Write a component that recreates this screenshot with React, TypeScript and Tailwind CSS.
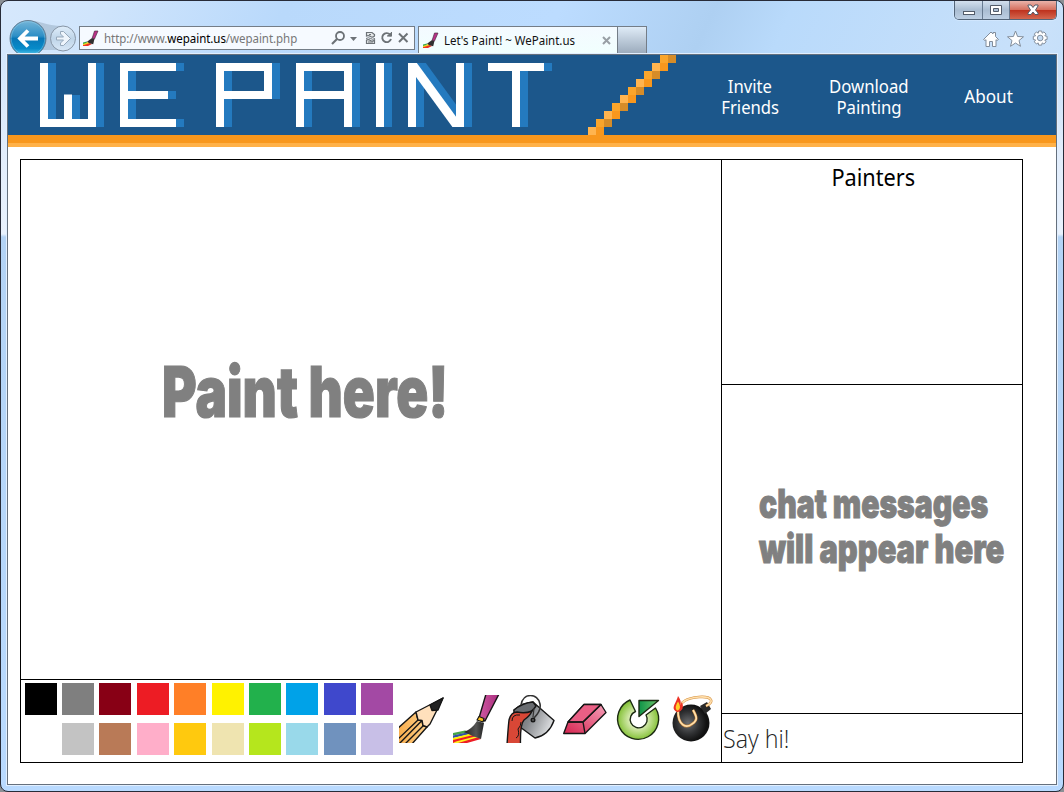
import React from "react";

const SWATCHES: string[][] = [
  ["bg-black", "bg-[#7f7f7f]", "bg-[#880015]", "bg-[#ed1c24]", "bg-[#ff7f27]", "bg-[#fff200]", "bg-[#22b14c]", "bg-[#00a2e8]", "bg-[#3f48cc]", "bg-[#a349a4]"],
  ["bg-white", "bg-[#c3c3c3]", "bg-[#b97a57]", "bg-[#ffaec9]", "bg-[#ffc90e]", "bg-[#efe4b0]", "bg-[#b5e61d]", "bg-[#99d9ea]", "bg-[#7092be]", "bg-[#c8bfe7]"],
];

type Box = [number, number, number, number];

const LOGO_SHADE: Box[] = [
  [40, 8, 8, 56], [64, 40, 8, 24], [88, 8, 8, 64],
  [168, 8, 8, 8], [120, 16, 8, 48], [160, 36, 8, 8], [168, 64, 8, 8],
  [216, 16, 8, 56], [264, 8, 8, 36],
  [296, 16, 8, 56], [344, 8, 8, 64],
  [376, 8, 8, 64],
  [408, 8, 8, 64], [456, 8, 8, 64],
  [536, 8, 8, 8], [512, 16, 8, 56],
];

const LOGO_FACE: Box[] = [
  [32, 8, 8, 64], [56, 39.5, 8, 32.5], [80, 8, 8, 64], [32, 64, 56, 8],
  [112, 8, 8, 64], [112, 8, 56, 8], [112, 36, 48, 8], [112, 64, 56, 8],
  [208, 8, 8, 64], [208, 8, 56, 8], [256, 8, 8, 36], [208, 36, 56, 8],
  [288, 8, 8, 64], [288, 8, 56, 8], [336, 8, 8, 64], [288, 36, 56, 8],
  [368, 8, 8, 64],
  [400, 8, 8, 64], [448, 8, 8, 64],
  [480, 8, 56, 8], [504, 8, 8, 64],
];

function Logo() {
  return (
    <svg width="672" height="80" viewBox="0 0 672 80" className="block shrink-0" role="img" aria-label="We Paint">
      <g fill="#247abf">
        {LOGO_SHADE.map(([x, y, w, h], i) => <rect key={i} x={x} y={y} width={w} height={h} />)}
      </g>
      <svg x="400" y="8" width="56" height="64">
        <line x1="5" y1="-10" x2="69" y2="78" stroke="#247abf" strokeWidth="9" />
      </svg>
      <g fill="#fff">
        {LOGO_FACE.map(([x, y, w, h], i) => <rect key={i} x={x} y={y} width={w} height={h} />)}
      </g>
      <svg x="400" y="8" width="56" height="64">
        <line x1="-4" y1="-10" x2="58" y2="75" stroke="#fff" strokeWidth="9" />
      </svg>
      {Array.from({ length: 10 }, (_, i) => (
        <g key={i}>
          <rect x={652 - i * 8} y={i * 8} width="8" height="8" fill={i % 2 ? "#ffb44f" : "#faa52b"} />
          <rect x={660 - i * 8} y={i * 8} width="8" height="8" fill={i % 2 ? "#f8971d" : "#d68c28"} />
        </g>
      ))}
    </svg>
  );
}

function Favicon() {
  return (
    <svg width="16" height="17" viewBox="0 0 16 17" className="shrink-0">
      <path d="M0 14.500 6 12.500l3 1.500-4 2H0Z" fill="#ed3324" />
      <path d="M0 13.500 5 12l2 1-6 2H0Z" fill="#f4d521" />
      <path d="M0 12.500 4 11.500v1L0 14Z" fill="#36a84a" />
      <path d="m9 8 2.500.8-1.300 5.400-3.700-.9-2.500-1.500Z" fill="#303030" />
      <path d="M11.500 1H15l-3.500 8-2.300-1Z" fill="#b83286" stroke="#3c2636" strokeWidth=".6" />
    </svg>
  );
}

function NavButtons() {
  return (
    <svg width="72" height="34" viewBox="0 0 72 34" className="block shrink-0 -mt-[7px]">
      <defs>
        <linearGradient id="back" x1="0" y1="0" x2="0" y2="1">
          <stop offset="0" stopColor="#75b5d8" />
          <stop offset=".43" stopColor="#2e8fc6" />
          <stop offset=".5" stopColor="#0877b7" />
          <stop offset=".78" stopColor="#078bc9" />
          <stop offset="1" stopColor="#6ad3f2" />
        </linearGradient>
        <linearGradient id="fwd" x1="0" y1="0" x2="0" y2="1">
          <stop offset="0" stopColor="#e0eefb" />
          <stop offset=".5" stopColor="#bfd5e9" />
          <stop offset="1" stopColor="#d9e8f7" />
        </linearGradient>
      </defs>
      <path d="M27 2C39 5 45 7 57 7L50 31H30Z" fill="#a8bdd3" opacity=".75" />
      <circle cx="20" cy="19.500" r="18" fill="url(#back)" stroke="#687f93" strokeWidth="1" />
      <circle cx="20" cy="19.500" r="16.800" fill="none" stroke="#9ed3eb" strokeWidth=".7" opacity=".6" />
      <path d="M30 19.500H12M20 11.500l-8 8 8 8" fill="none" stroke="#fff" strokeWidth="3.800" />
      <circle cx="55" cy="19.500" r="12.500" fill="url(#fwd)" stroke="#8795a5" strokeWidth="1" />
      <path d="M48.500 18h7l-3-3v-2.500h3l7 7-7 7h-3V24l3-3h-7Z" fill="#eef5fc" stroke="#97a9bb" strokeWidth="1" />
    </svg>
  );
}

function AddressIcons() {
  return (
    <svg width="84" height="22" viewBox="0 0 84 22" className="block shrink-0" fill="none" stroke="#6d7277">
      <circle cx="10" cy="9" r="4" strokeWidth="1.800" />
      <path d="m7 12-5 5" strokeWidth="2.200" />
      <path d="M20 10h7l-3.500 4Z" fill="#6d7277" stroke="none" />
      <path d="M36.500 9V5.500h5.500l2.500 2V9q-2 2-4 .5t-4-.5Zm0 4q2-1 4 .5t4-.5v3.500h-8Z" fill="#e4e7e9" strokeWidth="1.200" />
      <path d="M36 11.500q2.500-1.500 4.500 0t4.500 0M38 15h5M39 7.500h2" strokeWidth="1" />
      <path d="M60 7.500A4.500 4.500 0 1 0 61 12" strokeWidth="1.900" />
      <path d="m57 9 4.500.2V5" fill="#6d7277" strokeWidth="1" />
      <path d="m69 6.500 8.500 8.500m0-8.500L69 15" strokeWidth="2" />
    </svg>
  );
}

function WindowControls() {
  return (
    <div className="flex h-[19px] w-[103px] overflow-hidden rounded-b-[5px] border border-t-0 border-[#536579] shadow-[0_0_0_1px_#d7eaffaa]">
      <div className="flex w-[28px] items-center justify-center border-r border-[#687b91] bg-linear-to-b from-[#d3e0ee] via-[#aabdd2] to-[#bdcfe3]">
        <svg width="14" height="16" viewBox="0 0 14 16"><rect x="1.500" y="9.500" width="11" height="3" fill="#fff" stroke="#535c6a" /></svg>
      </div>
      <div className="flex w-[27px] items-center justify-center border-r border-[#687b91] bg-linear-to-b from-[#d3e0ee] via-[#aabdd2] to-[#bdcfe3]">
        <svg width="14" height="16" viewBox="0 0 14 16"><path d="M1.500 3.500h11v9h-11Zm3 3v3h5v-3Z" fill="#fff" fillRule="evenodd" stroke="#535c6a" /></svg>
      </div>
      <div className="flex flex-1 items-center justify-center bg-[linear-gradient(180deg,#e9b3aa_0%,#d5705f_48%,#bd301c_50%,#d4674f_100%)]">
        <svg width="14" height="16" viewBox="0 0 14 16"><path d="M2 3h3l2 2.500L9 3h3v1L9.500 8l2.500 3v1.500H9L7 10l-2 2.500H2V11l2.500-3L2 4Z" fill="#fff" stroke="#535c6a" /></svg>
      </div>
    </div>
  );
}

function ToolbarIcons() {
  return (
    <svg width="68" height="18" viewBox="0 0 68 18" fill="#fff" stroke="#828d9b" className="block">
      <path d="M1.500 9.500 9 2l2 2V2.500h2.500v4l3 3-1.500 1-1-.8v6.800h-3.500v-5h-3v5H4V9.700l-1 .8Z" />
      <path d="m33.500 1 2.100 5.500 5.900.3-4.500 3.700 1.500 5.800-5-3.300-5 3.300 1.500-5.800-4.500-3.700 5.900-.3Z" />
      <path d="m56.700 1 3 0 .5 2.200 1.700-1.300 2.200 2.200-1.300 1.700 2.300.5v3.200l-2.300.5 1.300 1.800-2.200 2.200-1.700-1.100-.5 2.200h-3l-.5-2.200-1.700 1.100-2.200-2.200 1.300-1.800-2.300-.5V6.300l2.300-.5-1.300-1.700 2.200-2.200 1.700 1.300Z" />
      <circle cx="58.200" cy="8" r="2.800" fill="#c4dcf5" />
    </svg>
  );
}

function Chrome() {
  return (
    <div className="h-[53px] shrink-0">
      <div className="flex h-[25px] items-start justify-end pr-1.5"><WindowControls /></div>
      <div className="flex h-7 items-start pl-[7px]">
        <NavButtons />
        <div className="-ml-px flex h-6 w-[336px] shrink-0 items-center border border-[#747d87] bg-[#f6faff] pl-[3px]">
          <Favicon />
          <div className="ml-[5px] flex-1 font-['Noto_Sans',sans-serif] text-xs leading-none tracking-[-0.060px] whitespace-nowrap text-[#777]">
            <span className="inline-block origin-left translate-y-px scale-x-[0.96]">http://www.<span className="text-black">wepaint.us</span>/wepaint.php</span>
          </div>
          <AddressIcons />
        </div>
        <div className="ml-[3px] flex h-[27px] w-[200px] shrink-0 items-center border border-b-0 border-[#747d87] bg-linear-to-b from-[#f4faff] to-[#f1fffe] pl-1">
          <Favicon />
          <div className="ml-[5px] flex-1 font-['Noto_Sans',sans-serif] text-xs leading-none whitespace-nowrap text-[#111]"><span className="inline-block origin-left translate-y-px scale-x-[0.957]">Let's Paint! ~ WePaint.us</span></div>
          <svg width="9" height="9" viewBox="0 0 9 9" className="mr-1.5" stroke="#989fa5" strokeWidth="2"><path d="m1 1 7 7m0-7-7 7" /></svg>
        </div>
        <div className="h-[27px] w-[29px] border border-b-0 border-l-0 border-[#747d87] bg-linear-to-b from-[#dfebf7] to-[#9cacbd]" />
        <div className="mt-[4px] mr-[13px] ml-auto"><ToolbarIcons /></div>
      </div>
    </div>
  );
}

function ToolIcons() {
  return (
    <svg width="320" height="50" viewBox="0 0 320 50" className="block shrink-0">
      <defs>
        <linearGradient id="wood"><stop offset="0" stopColor="#f7ab4a" /><stop offset="1" stopColor="#ffd18a" /></linearGradient>
        <linearGradient id="handle"><stop offset="0" stopColor="#cf5aa2" /><stop offset="1" stopColor="#a92d7e" /></linearGradient>
        <linearGradient id="bristle"><stop offset="0" stopColor="#222" /><stop offset=".6" stopColor="#555" /><stop offset="1" stopColor="#222" /></linearGradient>
        <linearGradient id="pail" x1="0" y1="0" x2="1" y2=".4"><stop offset="0" stopColor="#55585b" /><stop offset=".5" stopColor="#85888c" /><stop offset="1" stopColor="#d6d8da" /></linearGradient>
        <linearGradient id="rubber" x1="0" y1="1" x2="1" y2="0"><stop offset="0" stopColor="#d5244f" /><stop offset="1" stopColor="#f7a0ba" /></linearGradient>
        <radialGradient id="lime"><stop offset=".3" stopColor="#e9f4cb" /><stop offset="1" stopColor="#86c23a" /></radialGradient>
        <linearGradient id="leaf"><stop offset="0" stopColor="#0e9347" /><stop offset="1" stopColor="#6dc56b" /></linearGradient>
        <radialGradient id="bomb" cx=".42" cy=".5"><stop offset="0" stopColor="#6b6d70" /><stop offset=".6" stopColor="#303133" /><stop offset="1" stopColor="#111" /></radialGradient>
        <clipPath id="cut"><rect width="320" height="48" /></clipPath>
      </defs>
      <g clipPath="url(#cut)" strokeLinejoin="round">
        <g stroke="#161616" strokeWidth="1.400">
          <path d="M-2 34 17 17l2 8 4 .5 1 5 4 1.500-16 18H-2Z" fill="url(#wood)" />
          <path d="M17 17 44 3 31 29l-3 3-4-1.500-1-5-4-.5Z" fill="#ffe0bc" />
          <path d="m44 3-13 7 2 5.500 6-.5Z" fill="#222" />
          <path d="m19 25-22 21m26-20.500L0 49m24-18L6 49" fill="none" />
        </g>
        <g transform="translate(54 0)">
          <path d="M0 38 12 35.500l6 1.500-18 3.500Z" fill="#46a548" />
          <path d="M0 40.500 16 37l4 1.500-20 4.500Z" fill="#3350a5" />
          <path d="M0 43 18 38.500l4 1.500-22 5.500Z" fill="#fff200" />
          <path d="M0 45 20 40l7 3.500L10 48H0Z" fill="#ed1c24" />
          <path d="m3 46.500 19-5 3 .8-20 5.700H0Z" fill="#ffef20" />
          <path d="m8 48 18-5 2 1-14 4Z" fill="#ed1c24" />
          <path d="m24 26 7 2-3 16q-9-3-17-7 8-3 13-11Z" fill="url(#bristle)" />
          <path d="M33-1h13L32 26l-6-3Z" fill="url(#handle)" stroke="#161616" strokeWidth="1.400" />
          <path d="m26 21.500 5 2-1 3.500-6-2Z" fill="#f7be20" stroke="#161616" strokeWidth="1.200" />
        </g>
        <g transform="translate(108 0)" stroke="#161616" strokeWidth="1.400">
          <path d="M26 7 47 25.500Q42 40 28 43L13 32 7 15Q15 8 26 7Z" fill="url(#pail)" />
          <path d="M7 15Q15 8 26 7l3 4q-4 6-9 8L7 18Z" fill="#696c70" />
          <path d="M0 50q1-16 2-25 2-8 8-8 8 2 15-1-2 5-8 9-4 4-3.500 25Z" fill="#d94736" />
          <path d="M5 26q0-7 8-6M9 43q4-2 2-9 3-3 3-7" fill="none" strokeWidth="1" />
          <path d="M14 10C16-3 31-2 33 9c1 5-2 10-6 14" fill="none" stroke="#333" strokeWidth="1.600" />
          <path d="m27 13-1 9" fill="none" stroke="#333" strokeWidth="1.200" />
          <circle cx="26" cy="25" r="1.800" fill="#555" />
        </g>
        <g transform="translate(164 0)" stroke="#161616" strokeWidth="1.400">
          <path d="m5 27 16-17.500h17l5 8-21 21H.700Z" fill="url(#rubber)" />
          <path d="m5 27 16-17.500h17L20 27Z" fill="#ea5f85" />
          <path d="M20 27 22 38.500M20 27 38 9.500M5 27h15" fill="none" />
        </g>
        <g transform="translate(217 0)" stroke="#1b2a12" strokeWidth="1.400">
          <path d="M14 5A20.500 20.500 0 1 0 39.500 13L30 20a8.500 8.500 0 1 1-10.500-3.500Z" fill="url(#lime)" />
          <path d="M23 5.500h19.500L23 21.500Z" fill="url(#leaf)" />
        </g>
        <g transform="translate(272 0)">
          <circle cx="20" cy="28" r="18.500" fill="url(#bomb)" />
          <path d="m29 11 7-4 4 7-6 5Z" fill="#292929" />
          <path d="M7 17C8 6 17 3 28 2c13-1 16 5 7 9M7 16c0 14 8 18 14 13 6-4 5-7 1-14" fill="none" stroke="#d58f3d" strokeWidth="2.600" />
          <path d="M7 17C8 6 17 3 28 2c13-1 16 5 7 9M7 16c0 14 8 18 14 13 6-4 5-7 1-14" fill="none" stroke="#ffe0ae" strokeWidth="1.600" />
          <path d="M6 17C-1 13 5 9 7 1q4 5 2 9l2-3q3 8-4 10Z" fill="#ed3224" />
          <path d="M6 15.500q-3-3 1-9 4 6 0 9Z" fill="#ffcf27" />
        </g>
      </g>
    </svg>
  );
}

function Board() {
  return (
    <main className="mt-3 ml-3 flex h-[604px] w-[1003px] border border-black bg-white">
      <section className="flex w-[701px] flex-col border-r border-black">
        <div className="h-[520px] border-b border-black pt-[196px] pl-[141px]">
          <div className="w-fit origin-left scale-x-[0.755] font-['Inter',sans-serif] text-[70px] leading-[71px] font-black whitespace-nowrap text-[#808080] [-webkit-text-stroke:1.200px_#808080]">Paint here!</div>
        </div>
        <div className="flex h-[82px] pt-[3px] pl-[3.600px]">
          <div className="flex flex-col gap-2">
            {SWATCHES.map((row, r) => (
              <div key={r} className="flex gap-[5.400px]">
                {row.map((c) => <div key={c} className={"size-8 " + c} />)}
              </div>
            ))}
          </div>
          <div className="mt-3 ml-[5.800px]"><ToolIcons /></div>
        </div>
      </section>
      <aside className="flex w-[300px] flex-col">
        <div className="h-[225px] border-b border-black pt-[3px] pl-0.5 text-center font-['Noto_Sans',sans-serif] text-2xl leading-7 text-black"><span className="inline-block scale-x-[0.905]">Painters</span></div>
        <div className="h-[329px] border-b border-black pt-24 pl-[37px] font-['Inter',sans-serif] text-[40px] leading-[45px] font-black whitespace-nowrap text-[#808080] [-webkit-text-stroke:1px_#808080]">
          <div className="w-fit origin-left scale-x-[0.753]">chat messages</div>
          <div className="w-fit origin-left scale-x-[0.770]">will appear here</div>
        </div>
        <div className="flex h-12 items-center pt-0.5 pl-px font-['Open_Sans',sans-serif] text-[25px] font-light text-[#222]"><span className="inline-block origin-left scale-x-[0.930]">Say hi!</span></div>
      </aside>
    </main>
  );
}

export default function App() {
  return (
    <div className="h-[792px] w-[1064px] bg-[#8b9095]">
      <div className="flex h-[792px] w-[1064px] flex-col overflow-hidden rounded-[8px] border border-[#272b38] bg-[linear-gradient(180deg,transparent_53px,#e2edfb_150px,#e9f2fd_233px,#b3d3f5_236px,#b9daff_100%),linear-gradient(115deg,#d6e8fc_0px,#d0e5fc_90px,#b9d9fb_260px,#bcdcff_510px,#aed0f2_650px,#b9dafb_720px,#c9e1fa_960px,#b7d8f8_1100px)]">
        <Chrome />
        <div className="mx-1.5 h-[731px] border border-[#65707d] bg-white shadow-[0_0_0_1px_#e1efff]">
          <header className="flex h-20 bg-[#1c578b] font-['Noto_Sans',sans-serif] text-lg leading-[21px] text-white">
            <Logo />
            <nav className="flex h-20 flex-1 items-center pt-1">
              <a className="ml-[24px] flex w-[92px] flex-col items-center"><span className="scale-x-[0.925]">Invite</span><span className="scale-x-[0.925]">Friends</span></a>
              <a className="ml-[22px] flex w-[102px] flex-col items-center"><span className="scale-x-[0.930]">Download</span><span className="scale-x-[0.930]">Painting</span></a>
              <a className="-mt-0.5 ml-[34px] w-[70px] text-center"><span className="inline-block scale-x-[0.950]">About</span></a>
            </nav>
          </header>
          <div className="h-2 bg-[#f8971d]" />
          <div className="h-1 bg-[#ffb148]" />
          <Board />
        </div>
      </div>
    </div>
  );
}
